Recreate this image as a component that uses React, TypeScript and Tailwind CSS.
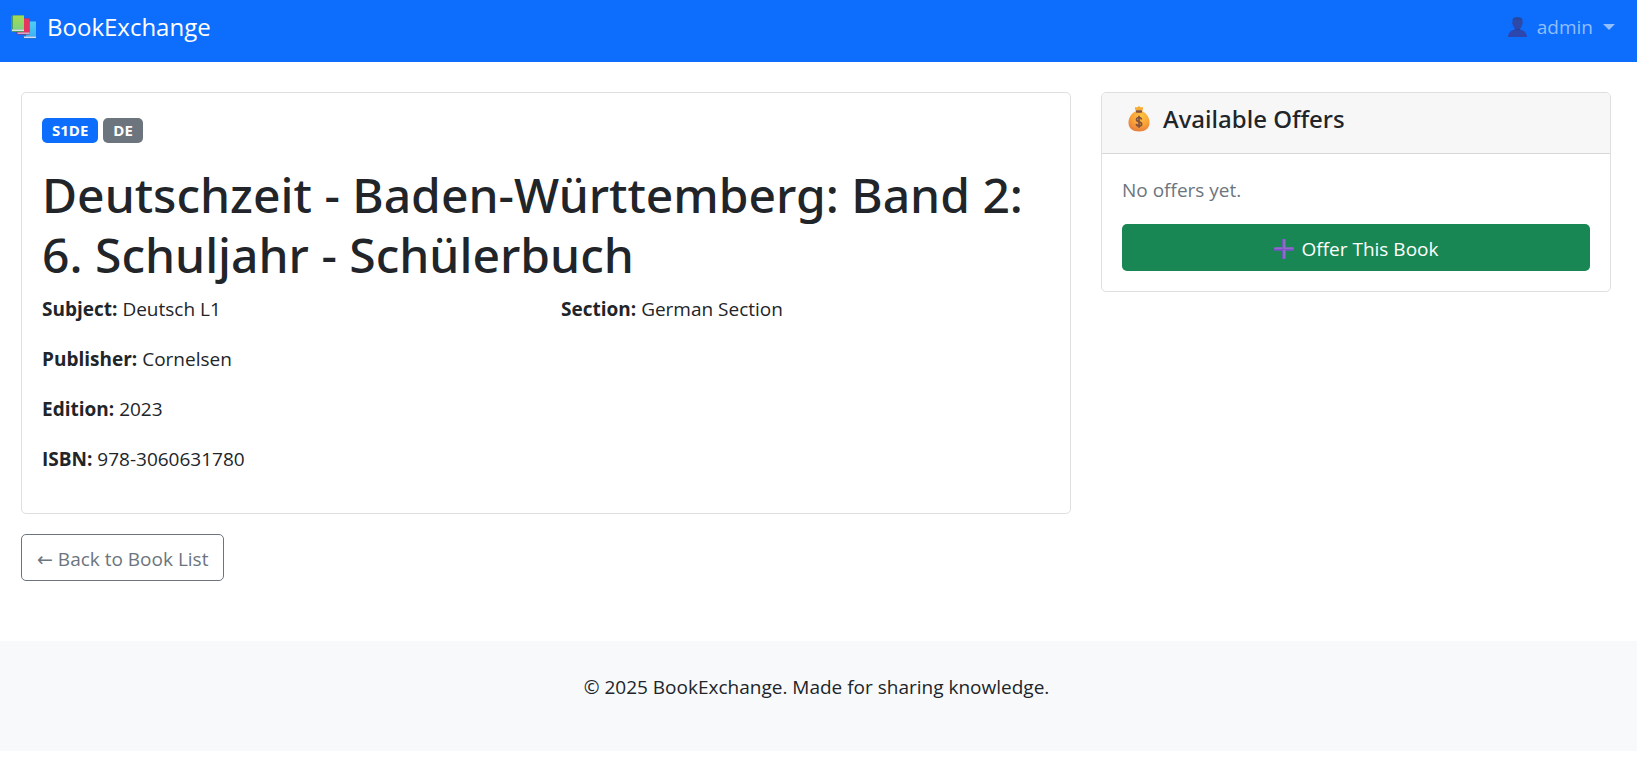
import React from "react";

function BooksIcon() {
  return (
    <svg viewBox="0 0 25 24" className="h-6 w-[25px] shrink-0" aria-hidden="true">
      <defs>
        <linearGradient id="bookGreen" x1="0" y1="0" x2="0" y2="1">
          <stop offset="0" stopColor="#a3dc4e" />
          <stop offset="1" stopColor="#7fd184" />
        </linearGradient>
        <linearGradient id="bookBlue" x1="0" y1="0" x2="0" y2="1">
          <stop offset="0" stopColor="#4ccff5" />
          <stop offset="1" stopColor="#3fb2f2" />
        </linearGradient>
      </defs>
      <path d="M12 7.500a1 1 0 0 1 1-1h12V24H13.500a1.500 1.500 0 0 1-1.500-1.500z" fill="#2272cf" />
      <rect x="15" y="6.500" width="10" height="15" fill="url(#bookBlue)" />
      <rect x="13" y="21.500" width="12" height="1.500" fill="#d5dcf2" />
      <path d="M6 4.500a1 1 0 0 1 1-1h11.500V19.500H7a1.500 1.500 0 0 1-1.500-1.500z" fill="#a32a5e" />
      <rect x="8" y="3.500" width="10.500" height="14" fill="#e5345f" />
      <rect x="6.500" y="17.500" width="12" height="1.300" fill="#e4c5dc" />
      <path d="M0 1.500A1 1 0 0 1 1 .5h12V17H1.500A1.500 1.500 0 0 1 0 15.500z" fill="#4a9a62" />
      <rect x="2" y=".5" width="11" height="14" fill="url(#bookGreen)" />
      <rect x="1" y="14.500" width="12" height="1.500" fill="#dde3e6" />
    </svg>
  );
}

function PersonIcon() {
  return (
    <svg viewBox="0 0 19 20" className="h-5 w-[19px] shrink-0" aria-hidden="true">
      <defs>
        <linearGradient id="personFill" x1="0" y1="0" x2="0" y2="1">
          <stop offset="0" stopColor="#2e4ba6" />
          <stop offset="1" stopColor="#2c46b0" />
        </linearGradient>
      </defs>
      <path
        d="M4.700 3.200C4.700 1 6.300.3 9.500.3s4.800.7 4.800 2.900v1.900c.8.200.8 2.300-.1 2.500-.4 2.300-1.400 3.600-2.500 4.300v.7c3.900.4 7.100 2.900 7.300 7.400H0c.2-4.500 3.400-7 7.300-7.400v-.7C6.200 11.200 5.200 9.900 4.800 7.600c-.9-.2-.9-2.300-.1-2.500z"
        fill="url(#personFill)"
      />
      <path d="M4.700 5V3.200C4.700 1 6.300.3 9.500.3s4.800.7 4.800 2.900V5l-.8-2.300h-8z" fill="#27479f" />
      <path d="M6.700 11.600c1.700 1.200 3.900 1.200 5.600 0v1c-1.600 1-4 1-5.600 0z" fill="#263b94" />
    </svg>
  );
}

function MoneyBagIcon() {
  return (
    <svg viewBox="0 0 22 26" className="h-[26px] w-[22px] shrink-0" aria-hidden="true">
      <defs>
        <radialGradient id="bagFill" cx=".6" cy=".25" r=".8">
          <stop offset="0" stopColor="#ffc43f" />
          <stop offset=".55" stopColor="#f9a138" />
          <stop offset="1" stopColor="#e67a3b" />
        </radialGradient>
      </defs>
      <path
        d="M8.300 5h5.400c4.300 1.900 7.800 6.300 7.800 11.500 0 6.200-4.300 9-10.500 9S.5 22.700.5 16.500C.5 11.300 4 6.900 8.300 5z"
        fill="url(#bagFill)"
      />
      <path d="M7.500 4.800C7.100 3 6.500 2 7.300 1.300c.8-.6 1.700.6 2.300-.2.500-.8.900-.9 1.400-.9s.9.100 1.400.9c.6.800 1.500-.4 2.300.2.800.7.200 1.700-.2 3.500z" fill="#f9ad35" />
      <rect x="8" y="4.300" width="6" height="2.400" rx=".6" fill="#80513f" />
      <path
        d="M13.500 13.500c-.2-1.300-1.200-2-2.500-2-1.500 0-2.500.8-2.500 2.100 0 3.200 5.100 1.300 5.100 4.400 0 1.300-1.100 2.100-2.600 2.100s-2.500-.8-2.700-2.200M11 9.800v12"
        fill="none"
        stroke="#80513f"
        strokeWidth="1.700"
      />
    </svg>
  );
}

function PlusIcon() {
  return (
    <svg viewBox="0 0 20 20" className="h-5 w-5 shrink-0" aria-hidden="true">
      <path
        d="M9 0h2a.8.8 0 0 1 .8.800v7.400h7.400a.8.8 0 0 1 .8.800v2a.8.8 0 0 1-.8.800h-7.400v7.400a.8.8 0 0 1-.8.800H9a.8.8 0 0 1-.8-.800v-7.400H.8A.8.8 0 0 1 0 11V9a.8.8 0 0 1 .8-.800h7.400V.8A.8.8 0 0 1 9 0z"
        fill="#7f4fd0"
      />
      <path d="M9.300.4h2v8.200h8.200v1.300H9.300zM.5 8.600h7.700v1.300H.5zM9.300 11h2v8.500h-2z" fill="#8b74bd" />
    </svg>
  );
}

const details = [
  { label: "Subject:", value: "Deutsch L1" },
  { label: "Section:", value: "German Section" },
  { label: "Publisher:", value: "Cornelsen" },
  { label: "Edition:", value: "2023" },
  { label: "ISBN:", value: "978-3060631780" },
];

function Detail({ label, value }: { label: string; value: string }) {
  return (
    <p>
      <strong className="font-bold">{label}</strong> {value}
    </p>
  );
}

export default function App() {
  const [subject, section, ...rest] = details;
  return (
    <div className="bg-white font-['Open_Sans','Noto_Sans',sans-serif] text-[19px] leading-[30px] text-[#212529]">
      <nav className="flex items-start justify-between bg-[#0d6efd] pt-2 pr-[22px] pb-4 pl-[11px]">
        <a href="#home" className="flex items-center gap-[11px] text-2xl leading-[38px] text-white">
          <BooksIcon />
          BookExchange
        </a>
        <button type="button" className="flex items-center leading-[38px] text-[#92beff]">
          <PersonIcon />
          <span className="ml-2.5">admin</span>
          <span className="ml-2.5 border-x-[6px] border-t-[6px] border-x-transparent border-t-[#92beff]" />
        </button>
      </nav>

      <main className="grid grid-cols-[35fr_17fr] items-start gap-x-[30px] pt-[30px] pr-[26px] pb-[60px] pl-[21px]">
        <div>
          <section className="rounded-[5px] border border-[#dfdfdf] px-5 pt-[25px] pb-[39px]">
            <div className="flex gap-[5px] text-[15px] leading-[25px] font-bold text-white">
              <span className="rounded-[5px] bg-[#0d6efd] px-2.5">S1DE</span>
              <span className="rounded-[5px] bg-[#6c757d] px-2.5">DE</span>
            </div>
            <h1 className="mt-[22px] font-['Noto_Sans','Open_Sans',sans-serif] text-5xl leading-[60px] font-medium">
              Deutschzeit - Baden-Württemberg: Band 2: 6. Schuljahr - Schülerbuch
            </h1>
            <div className="mt-[9px] grid grid-cols-2 gap-x-[30px]">
              <Detail {...subject} />
              <Detail {...section} />
            </div>
            <div className="mt-5 flex flex-col gap-5">
              {rest.map((item) => (
                <Detail key={item.label} {...item} />
              ))}
            </div>
          </section>
          <a
            href="#books"
            className="mt-5 inline-block rounded-[5px] border border-[#6c757d] px-[15px] pt-[9px] pb-1.5 text-[#6c757d]"
          >
            <span className="font-['DejaVu_Sans',sans-serif] leading-none">←</span> Back to Book List
          </a>
        </div>

        <aside className="overflow-hidden rounded-[5px] border border-[#dfdfdf]">
          <header className="flex items-center gap-[13px] border-b border-[#d8d8d8] bg-[#f7f7f7] px-[26px] pt-[11px] pb-[19px]">
            <MoneyBagIcon />
            <h2 className="font-['Noto_Sans','Open_Sans',sans-serif] text-2xl leading-[30px] font-medium">
              Available Offers
            </h2>
          </header>
          <div className="px-5 pt-[21px] pb-5">
            <p className="text-[#6c757d]">No offers yet.</p>
            <button
              type="button"
              className="mt-[19px] flex w-full items-center justify-center gap-2 rounded-[5px] bg-[#198754] pt-2.5 pb-[7px] text-white"
            >
              <PlusIcon />
              Offer This Book
            </button>
          </div>
        </aside>
      </main>

      <footer className="bg-[#f8f9fb] pt-[31px] pr-1 pb-[49px] text-center">
        <p>© 2025 BookExchange. Made for sharing knowledge.</p>
      </footer>
    </div>
  );
}
